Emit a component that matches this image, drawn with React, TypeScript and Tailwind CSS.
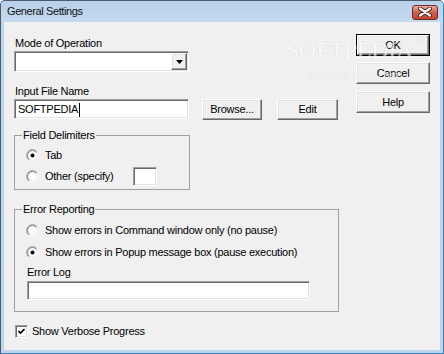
import React from 'react';

const raised =
  'bg-[#f0f0f0] border border-t-white border-l-white border-b-[#696969] border-r-[#696969] shadow-[inset_-1px_-1px_0_#a0a0a0,inset_1px_1px_0_#e3e3e3]';
const sunken =
  'bg-white border border-t-[#a0a0a0] border-l-[#a0a0a0] border-b-white border-r-white shadow-[inset_1px_1px_0_#696969,inset_-1px_-1px_0_#e3e3e3]';

function Radio({ id, checked }: { id: string; checked?: boolean }) {
  return (
    <svg width="13" height="13" viewBox="0 0 13 13" className="shrink-0">
      <defs>
        <linearGradient id={`${id}o`} x1="0" y1="0" x2="1" y2="1">
          <stop offset="0.45" stopColor="#a8a8a8" />
          <stop offset="0.6" stopColor="#ffffff" />
        </linearGradient>
        <linearGradient id={`${id}i`} x1="0" y1="0" x2="1" y2="1">
          <stop offset="0.45" stopColor="#7a7a7a" />
          <stop offset="0.6" stopColor="#e3e3e3" />
        </linearGradient>
      </defs>
      <circle cx="6.5" cy="6.5" r="6" fill="none" stroke={`url(#${id}o)`} />
      <circle cx="6.5" cy="6.5" r="5" fill="#fbfbfb" stroke={`url(#${id}i)`} />
      {checked && <circle cx="6.5" cy="6.5" r="2" fill="#000" />}
    </svg>
  );
}

function Button({ label, className = '' }: { label: string; className?: string }) {
  return (
    <button type="button" className={`${raised} flex items-center justify-center ${className}`}>
      {label}
    </button>
  );
}

export default function App() {
  return (
    <div className="relative w-[444px] h-[354px] overflow-hidden flex flex-col border border-[#4b5b6e] border-r-[#2f86c4] border-b-[#2f86c4] rounded-t-[5px] bg-[#bfd5ec] font-['Liberation_Sans',Arial,sans-serif] text-[11px] leading-[13px] tracking-[-0.25px] text-black">
      {/* title bar */}
      <div className="h-[21px] shrink-0 flex items-center justify-between pl-[6px] pr-[5px] bg-linear-to-b from-[#b8d0ea] to-[#c4d9ef]">
        <span className="text-[11px] tracking-[-0.4px] text-[#111]">General Settings</span>
        <div className="mt-[1px] w-[26px] h-[15px] rounded-[3px] border border-[#6d2c25] bg-linear-to-b from-[#e9a99b] via-[#d0604c] to-[#c3412c] flex items-center justify-center">
          <svg width="14" height="10" viewBox="0 0 14 10">
            <path d="M2 1.5 L12 8.5 M12 1.5 L2 8.5" stroke="#4a1a15" strokeWidth="4" strokeLinecap="round" />
            <path d="M2 1.5 L12 8.5 M12 1.5 L2 8.5" stroke="#fff" strokeWidth="2.2" strokeLinecap="round" />
          </svg>
        </div>
      </div>

      {/* client area */}
      <div className="flex-1 mx-[3px] mb-[3px] bg-[#f0f0f0] flex">
        <div className="flex-1 flex flex-col pl-[10px]">
          <div className="mt-[15px] pl-[1px]">Mode of Operation</div>
          <div className={`${sunken} mt-[1px] w-[175px] h-[21px] p-[1px] flex justify-end`}>
            <div className={`${raised} w-[16px] h-full flex items-center justify-center`}>
              <svg width="7" height="4" viewBox="0 0 7 4">
                <polygon points="0,0 7,0 3.5,4" fill="#000" />
              </svg>
            </div>
          </div>

          <div className="mt-[13px] pl-[1px]">Input File Name</div>
          <div className="mt-[1px] flex items-start">
            <div className={`${sunken} w-[175px] h-[20px] pl-[3px] pt-[1px] flex items-center`}>
              <span>SOFTPEDIA</span>
              <span className="ml-[1px] w-[1px] h-[14px] bg-black" />
            </div>
            <Button label="Browse..." className="ml-[13px] w-[60px] h-[21px]" />
            <Button label="Edit" className="ml-[15px] w-[61px] h-[21px]" />
          </div>

          <fieldset className="mt-[9px] w-[176px] border border-[#a0a0a0]">
            <legend className="ml-[7px] px-[1px]">Field Delimiters</legend>
            <div className="pl-[11px] pb-[3px] flex flex-col">
              <label className="mt-[7px] h-[13px] flex items-center gap-[6px]">
                <Radio id="rtab" checked />
                Tab
              </label>
              <div className="mt-[4px] h-[20px] flex items-center">
                <label className="w-[107px] flex items-center gap-[6px]">
                  <Radio id="roth" />
                  Other (specify)
                </label>
                <div className={`${sunken} w-[24px] h-[19px] bg-[#f0f0f0]`} />
              </div>
            </div>
          </fieldset>

          <fieldset className="mt-[13px] w-[325px] border border-[#a0a0a0]">
            <legend className="ml-[7px] px-[1px]">Error Reporting</legend>
            <div className="pl-[11px] pb-[11px] flex flex-col">
              <label className="mt-[8px] h-[13px] flex items-center gap-[6px]">
                <Radio id="rcmd" />
                Show errors in Command window only (no pause)
              </label>
              <label className="mt-[9px] h-[13px] flex items-center gap-[6px]">
                <Radio id="rpop" checked />
                Show errors in Popup message box (pause execution)
              </label>
              <div className="mt-[7px] ml-[1px]">Error Log</div>
              <div className={`${sunken} mt-[2px] ml-[1px] w-[283px] h-[19px]`} />
            </div>
          </fieldset>

          <label className="mt-[13px] pl-[1px] h-[13px] flex items-center gap-[4px]">
            <div className={`${sunken} w-[13px] h-[13px] flex items-center justify-center`}>
              <svg width="7" height="7" viewBox="0 0 7 7">
                <path d="M0.5 3 L2.5 5 L6.5 1" stroke="#000" strokeWidth="1.7" fill="none" />
              </svg>
            </div>
            Show Verbose Progress
          </label>
        </div>

        <div className="w-[74px] mr-[10px] pt-[12px] flex flex-col">
          <div className="border border-black h-[22px] flex">
            <Button label="OK" className="flex-1" />
          </div>
          <Button label="Cancel" className="mt-[6px] h-[22px]" />
          <Button label="Help" className="mt-[7px] h-[22px]" />
        </div>
      </div>

      {/* watermark */}
      <div className="pointer-events-none absolute left-[285px] top-[37px] font-['Liberation_Serif',serif] text-[24px] leading-[24px] text-white opacity-60 [text-shadow:0_0_1px_#b8b8b8]">
        SOFTPEDIA<span className="align-top text-[8px] leading-[8px] ml-[3px]">™</span>
      </div>
      <div className="pointer-events-none absolute left-[307px] top-[68px] text-[11px] text-white opacity-60 [text-shadow:0_0_1px_#b8b8b8]">
        www.softpedia.com
      </div>
    </div>
  );
}
